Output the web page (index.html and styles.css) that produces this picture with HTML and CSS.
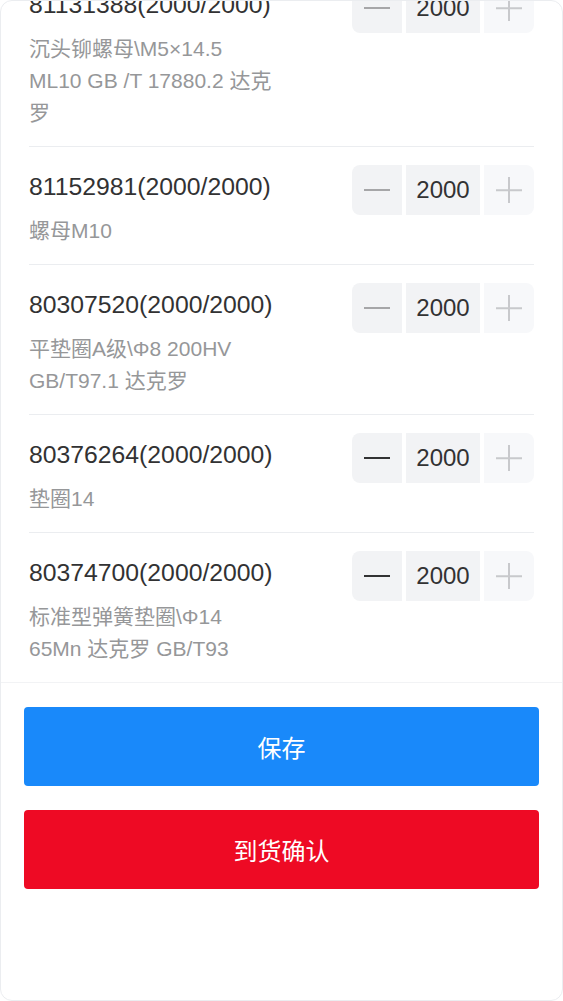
FILE: index.html
```html
<!DOCTYPE html>
<html lang="zh-CN">
<head>
<meta charset="utf-8">
<title>到货确认</title>
<link rel="stylesheet" href="styles.css">
</head>
<body>
<div class="page">
  <div class="list-wrap">
    <ul class="list">
      <li class="item">
        <div class="info">
          <div class="title">81131388(2000/2000)</div>
          <div class="desc">沉头铆螺母\M5×14.5 ML10 GB /T 17880.2 达克罗</div>
        </div>
        <div class="stepper">
          <span class="btn minus"></span>
          <span class="input">2000</span>
          <span class="btn plus"></span>
        </div>
      </li>
      <li class="item">
        <div class="info">
          <div class="title">81152981(2000/2000)</div>
          <div class="desc">螺母M10</div>
        </div>
        <div class="stepper">
          <span class="btn minus"></span>
          <span class="input">2000</span>
          <span class="btn plus"></span>
        </div>
      </li>
      <li class="item">
        <div class="info">
          <div class="title">80307520(2000/2000)</div>
          <div class="desc">平垫圈A级\Φ8 200HV GB/T97.1 达克罗</div>
        </div>
        <div class="stepper">
          <span class="btn minus"></span>
          <span class="input">2000</span>
          <span class="btn plus"></span>
        </div>
      </li>
      <li class="item">
        <div class="info">
          <div class="title">80376264(2000/2000)</div>
          <div class="desc">垫圈14</div>
        </div>
        <div class="stepper">
          <span class="btn minus strong"></span>
          <span class="input">2000</span>
          <span class="btn plus"></span>
        </div>
      </li>
      <li class="item">
        <div class="info">
          <div class="title">80374700(2000/2000)</div>
          <div class="desc">标准型弹簧垫圈\Φ14 65Mn 达克罗 GB/T93</div>
        </div>
        <div class="stepper">
          <span class="btn minus strong"></span>
          <span class="input">2000</span>
          <span class="btn plus"></span>
        </div>
      </li>
    </ul>
  </div>
  <div class="footer">
    <button class="action primary">保存</button>
    <button class="action danger">到货确认</button>
  </div>
</div>
</body>
</html>
```

FILE: styles.css
```css
* { box-sizing: border-box; }
html, body {
  margin: 0;
  padding: 0;
  background: #fff;
}
body {
  font-family: "Liberation Sans", Arial, "Noto Sans CJK SC", sans-serif;
  color: #323233;
}
.page {
  width: 563px;
  height: 1001px;
  border: 1px solid #ebedf0;
  border-radius: 12px;
  overflow: hidden;
  display: flex;
  flex-direction: column;
  background: #fff;
}
.list-wrap {
  height: 681px;
  overflow: hidden;
  flex: none;
}
.list {
  list-style: none;
  margin: -36px 28px 0 28px;
  padding: 0;
}
.item {
  display: flex;
  align-items: flex-start;
  padding: 18px 0 17px 0;
  border-bottom: 1px solid #ebedf0;
}
.item:last-child { border-bottom: none; }
.info {
  width: 248px;
  flex: none;
}
.title {
  font-size: 24.75px;
  line-height: 44px;
  color: #323233;
  white-space: nowrap;
}
.desc {
  margin-top: 6px;
  font-size: 21px;
  line-height: 32px;
  color: #969799;
}
.stepper {
  margin-left: auto;
  display: flex;
  gap: 4px;
  height: 50px;
}
.btn {
  position: relative;
  width: 50px;
  height: 50px;
  background: #f2f3f5;
}
.btn.minus { border-radius: 8px 0 0 8px; }
.btn.plus { border-radius: 0 8px 8px 0; background: #f7f8fa; }
.btn::before,
.btn::after {
  content: "";
  position: absolute;
  left: 50%;
  top: 50%;
  transform: translate(-50%, -50%);
}
.btn.minus::before {
  width: 26px;
  height: 1px;
  background: #5a5a5c;
}
.btn.minus.strong::before {
  height: 2px;
  background: #323233;
}
.btn.minus::after { display: none; }
.btn.plus::before {
  width: 26px;
  height: 1.5px;
  background: #c8c9cc;
}
.btn.plus::after {
  width: 2px;
  height: 26px;
  background: #c8c9cc;
}
.input {
  width: 74px;
  height: 50px;
  background: #f2f3f5;
  font-size: 24px;
  line-height: 50px;
  text-align: center;
  color: #323233;
}
.footer {
  border-top: 1px solid #f2f3f5;
  padding: 24px 23px 0 23px;
  display: flex;
  flex-direction: column;
  gap: 24px;
}
.action {
  display: block;
  width: 100%;
  height: 79px;
  border: none;
  border-radius: 4px;
  color: #fff;
  font-family: "Liberation Sans", Arial, "Noto Sans CJK SC", sans-serif;
  font-size: 24px;
  padding: 0;
}
.action.primary { background: #1989fa; }
.action.danger { background: #ee0a24; }
```
